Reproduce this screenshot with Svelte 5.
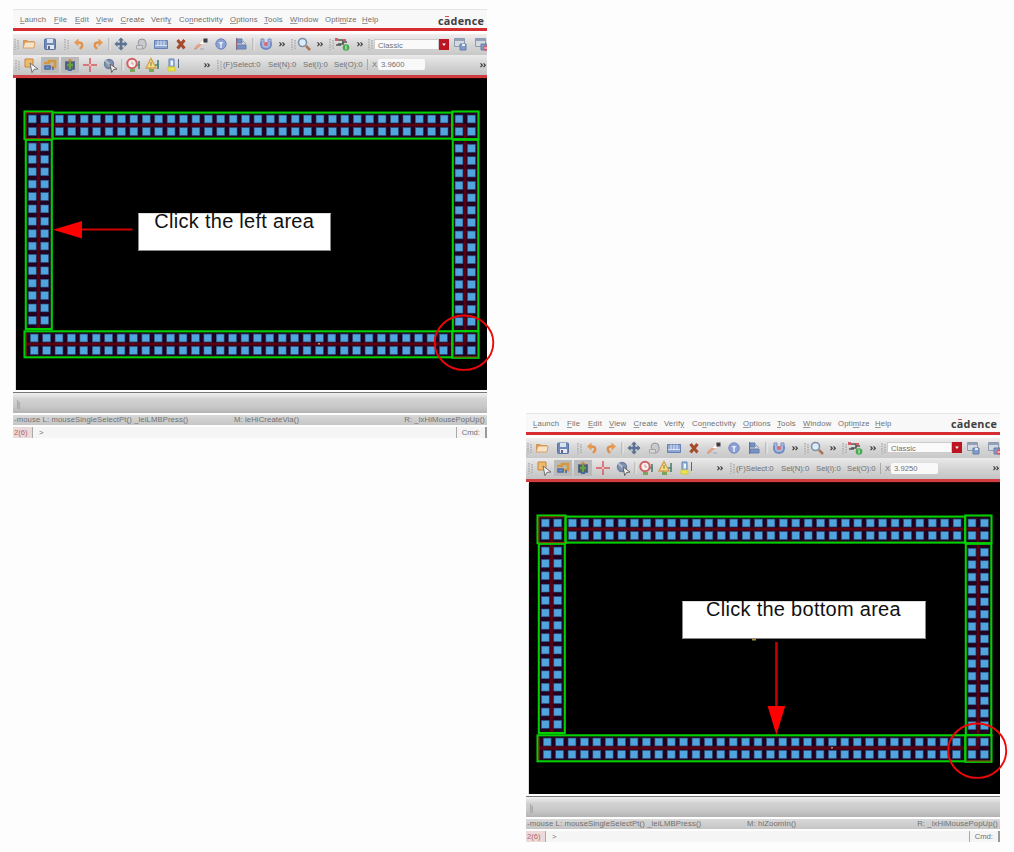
<script>
  const menus = [
    ['', 'L', 'aunch'], ['', 'F', 'ile'], ['', 'E', 'dit'], ['', 'V', 'iew'],
    ['', 'C', 'reate'], ['Verif', 'y', ''], ['Co', 'n', 'nectivity'], ['', 'O', 'ptions'],
    ['', 'T', 'ools'], ['', 'W', 'indow'], ['Opti', 'm', 'ize'], ['', 'H', 'elp']
  ];
  const windows = [
    { id: 'left', x: '3.9600', m: 'M: leHiCreateVia()', note: 'Click the left area' },
    { id: 'bottom', x: '3.9250', m: 'M: hiZoomIn()', note: 'Click the bottom area' }
  ];
  const main = ['grip', 'folder', 'save', 'grip2', 'undo', 'redo', 'sep', 'move', 'copy', 'ruler', 'delete', 'stretch', 'info', 'align', 'sep', 'via', 'more', 'grip', 'search', 'more', 'grip', 'net', 'more', 'grip'];
  const modes = ['grip', 'select', 'partial', 'gravity', 'cross', 'pick', 'sep', 'ring', 'warn', 'level', 'more', 'grip'];
  const range = (n) => Array.from({ length: n }, (_, i) => i);
  const size = 7.8;
  const vias = [];
  const add = (x, y) => vias.push([x - size / 2, y - size / 2]);
  for (const x of [32.3, 44.7, 459, 471.4]) for (const y of [119, 131.5]) add(x, y);
  for (const i of range(32)) for (const y of [119, 131.5]) add(59.4 + i * 12.41, y);
  for (const i of range(34)) for (const y of [338, 350.4]) add(34.2 + i * 12.4, y);
  for (const i of range(15)) {
    for (const x of [32.3, 44.7]) add(x, 147 + i * 12.38);
    for (const x of [459, 471.4]) add(x, 148.3 + i * 12.38);
  }
  for (const x of [459, 471.4]) for (const y of [338, 350.4]) add(x, y);
</script>

{#snippet icon(name)}
  <svg class="ic {name}" viewBox="0 0 16 16">
    {#if name === 'grip' || name === 'grip2'}
      <path d="M7 3v11M10 4v10" stroke="#aaa" stroke-width="1.4" stroke-dasharray="1.5 1" />
    {:else if name === 'sep'}
      <path d="M8 2v12" stroke="#a3a3a3" /><path d="M9 2v12" stroke="#eee" />
    {:else if name === 'more'}
      <path d="M5.5 6.3l1.8 1.9-1.8 1.9M8.5 6.3l1.8 1.9-1.8 1.9" stroke="#3c3c3c" stroke-width="1.2" fill="none" />
    {:else if name === 'folder'}
      <path d="M2 12V4h4l1 1h6v2" fill="#d99752" /><path d="M4 6h10l-1 6H2z" fill="#f7e3c8" stroke="#d69a5c" stroke-width=".9" />
    {:else if name === 'save'}
      <rect x="2.5" y="3" width="11" height="10.5" rx="1" fill="#7189b5" stroke="#5873a6" /><path d="M5 3h6v4H5z" fill="#d9e3f3" /><path d="M5 9h7v4H5z" fill="#e4e7ed" /><path d="M6 10h2v3H6z" fill="#5c6987" />
    {:else if name === 'undo'}
      <path d="M5 6.5h3q4 0 3 4l-2 2.5" fill="none" stroke="#e0914d" stroke-width="2.5" /><path d="M3 6.5l4.5-4v8z" fill="#e69b55" />
    {:else if name === 'redo'}
      <path d="M11 6.5H8q-4 0-3 4l2 2.5" fill="none" stroke="#e0914d" stroke-width="2.5" /><path d="M13 6.5L8.5 2.5v8z" fill="#e69b55" />
    {:else if name === 'move'}
      <path d="M8 3v10M3 8h10" stroke="#5c7292" stroke-width="2.6" /><path d="M8 1.5l3 3H5zM8 14.5l3-3H5zM1.5 8l3-3v6zM14.5 8l-3-3v6z" fill="#5c7292" />
    {:else if name === 'copy'}
      <path d="M5 7q0-4 4-4t4 4v3q-1 3-4 3z" fill="#c9cacb" stroke="#96989d" /><path d="M3.5 9.5h6v3.5h-6z" fill="#d8d8da" stroke="#a3a5a9" />
    {:else if name === 'ruler'}
      <path d="M1.5 4.5h13v8h-13z" fill="#90a7d4" stroke="#647fb6" /><path d="M5 4.5v5M8 4.5v5M11 4.5v5M2 9.5h12" stroke="#dce5f7" />
    {:else if name === 'delete'}
      <path d="M4.5 4l7 8.5M11.5 4l-7 8.5" stroke="#a64a2d" stroke-width="3" />
    {:else if name === 'stretch'}
      <path d="M1 13l3-4 2 2-4 3z" fill="#d19678" /><path d="M3 12l9-8" stroke="#e2a28c" stroke-width="3" /><path d="M6 8l4-4 1 4z" fill="#fff" /><path d="M10.5 2.5h4v4h-4z" fill="#3c4046" /><path d="M7 13h4" stroke="#9ba7b5" />
    {:else if name === 'info'}
      <circle cx="8" cy="8" r="5.2" fill="#8da0d2" stroke="#7187bd" /><path d="M5.5 6h5L8 9z" fill="#e5ebfb" /><path d="M8 8v4" stroke="#e5ebfb" stroke-width="1.5" />
    {:else if name === 'align'}
      <path d="M3.5 2v12" stroke="#a55760" /><path d="M4 3h5v4H4zM4 9h9v4H4z" fill="#7791c5" stroke="#647faf" /><path d="M10 5l3 3" stroke="#8b9dc4" />
    {:else if name === 'via'}
      <path d="M3 3h3v3H3zM10 3h3v3h-3z" fill="#b9c6e5" stroke="#748dc5" /><path d="M3 6q-1 7 5 7t5-7" fill="#a5b6dd" stroke="#6e88c4" stroke-width="1.8" /><circle cx="8" cy="8" r="2" fill="#df6572" />
    {:else if name === 'search'}
      <circle cx="6.5" cy="6.5" r="4" fill="#d8ecfc" stroke="#7f8fa5" stroke-width="1.6" /><path d="M10 10l4 4" stroke="#ac7655" stroke-width="2.5" />
    {:else if name === 'net'}
      <path d="M2 4h7v4H4M9 6h4M2 9h5" stroke="#555" stroke-width="1.6" fill="none" /><path d="M1 2h3v3H1zM9 3h3v2H9z" fill="#dc5966" /><circle cx="12" cy="11.5" r="3.3" fill="#45a951" /><path d="M12 9.5v4" stroke="#dfffdc" />
    {:else if name === 'select'}
      <path d="M2 2h8v8H2z" fill="#eebb6b" stroke="#c48542" /><path d="M7 6l8 6-4 .3-2 3.3z" fill="#f7f7f7" stroke="#666" stroke-width=".9" />
    {:else if name === 'partial'}
      <path d="M2 6h5V4h6v6H8" fill="none" stroke="#d6983f" stroke-width="2.7" /><path d="M3 9h5v3H3zM11 10v3" stroke="#4c6da7" stroke-width="1.6" fill="#7593cc" />
    {:else if name === 'gravity'}
      <path d="M4 5h8v7H4z" fill="#626d4f" stroke="#425c82" stroke-width="1.7" /><path d="M8 1.5l3 3H5z" fill="#c78c3e" /><path d="M8 5v7M5 8h6" stroke="#62a346" stroke-width="2" /><path d="M6 13h4" stroke="#4a68a3" stroke-width="2" />
    {:else if name === 'cross'}
      <path d="M8 1v14M1 8h14" stroke="#d9585d" stroke-width="1.5" /><circle cx="8" cy="8" r="1" fill="#f8dada" />
    {:else if name === 'pick'}
      <circle cx="7" cy="7" r="4.5" fill="#8294b2" stroke="#6c7e9c" stroke-width="1.4" /><path d="M3 3l8 8" stroke="#aebbd1" stroke-width="2" /><path d="M8 7l7 5-3.5.5-1.8 3z" fill="#eee" stroke="#555" stroke-width=".9" />
    {:else if name === 'ring'}
      <path d="M14 4v8M11 8h4M7 11v4" stroke="#4f8578" stroke-width="1.7" /><path d="M5 12h5v3H5z" fill="#79a75d" /><circle cx="7" cy="6.5" r="4.7" fill="#faeeec" stroke="#cf5f62" stroke-width="2" /><path d="M7 4.5V7h2" stroke="#b5898a" stroke-width=".8" />
    {:else if name === 'warn'}
      <path d="M14 3v9M11 8h4M6 10v5" stroke="#4f8578" stroke-width="1.7" /><path d="M5 12h5v3H5z" fill="#79a75d" /><path d="M7 1.5L12 11H2z" fill="#f1e08a" stroke="#d3a04c" stroke-width="1.3" /><path d="M7 5v4" stroke="#857438" />
    {:else if name === 'level'}
      <path d="M5 2h5v8H5z" fill="#a9c1e4" stroke="#5d80b6" /><path d="M7 4h2v4H7z" fill="#f5f8fd" /><path d="M4 10h7v4H4z" fill="#eee34e" stroke="#d2c844" /><path d="M14.5 2v9" stroke="#536a8b" />
    {:else if name === 'wsave' || name === 'wdel'}
      <path d="M2.5 2.5h10v8h-10z" fill="#d4d9e2" stroke="#8f9bb0" /><path d="M3 4h9" stroke="#8292b0" stroke-width="1.6" /><path d="M8 8h6v6H8z" fill="#819bca" stroke="#657ea9" />
      {#if name === 'wdel'}<circle cx="13" cy="12" r="2.7" fill="#d75961" /><path d="M11.5 12h3" stroke="#fff" />{:else}<path d="M10 8h3v2h-3z" fill="#e5edf9" />{/if}
    {/if}
  </svg>
{/snippet}

<div class="page">
  {#each windows as win}
    <section class="window {win.id}">
      <nav class="menubar">
        {#each menus as [a, key, b]}<span>{a}<u>{key}</u>{b}</span>{/each}
        <strong class="brand">c<i>a</i>dence</strong>
      </nav>
      <div class="bar main">
        {#each main as name}{@render icon(name)}{/each}
        <div class="combo">Classic</div>
        <div class="drop"><svg viewBox="0 0 10 12"><path d="M3 5h4L5 7.5z" fill="#fff" /></svg></div>
        {@render icon('wsave')}
        {@render icon('wdel')}
      </div>
      <div class="bar modes">
        {#each modes as name}{@render icon(name)}{/each}
        <span>(F)Select:0</span><span>Sel(N):0</span><span>Sel(I):0</span><span>Sel(O):0</span>
        <span class="coord">X</span><span class="field">{win.x}</span>
        {@render icon('more')}
      </div>
      <svg class="canvas" viewBox="16 79 471 311">
        <rect x="16" y="79" width="471" height="311" fill="#000" />
        <path d="M25 112h453v246H25zM52 139v192h400V139z" fill="#22001f" fill-rule="evenodd" />
        <path d="M38.5 329V125.2H465V344H26" fill="none" stroke="#5b0011" stroke-width="2.8" />
        {#each vias as [x, y]}
          <rect {x} {y} width={size} height={size} fill="#50a5df" stroke="#2d5580" stroke-width=".6" />
        {/each}
        <g class="outline">
          <rect x="24.5" y="111.5" width="28" height="27.6" />
          <rect x="52.5" y="112.6" width="399.5" height="26" />
          <rect x="452.3" y="111.5" width="26.2" height="27.6" />
          <rect x="25.8" y="139.8" width="26" height="189.2" />
          <rect x="452.8" y="139.8" width="25.5" height="191.2" />
          <rect x="24.5" y="331.3" width="427.8" height="26" />
          <rect x="452.3" y="331.3" width="26.2" height="26.5" />
        </g>
        <path d="M26 138.6V112.8H51.5M26 356V333M453 357h25M26 138.6h26" fill="none" stroke="#8f3a08" stroke-width="1" />
        <rect x="318" y="343" width="2" height="1.5" fill="#a99a7b" />
      </svg>
      <div class="prompt"><svg viewBox="0 0 8 14"><path d="M3 2v10M5 4v8" stroke="#aaa" stroke-width="1.5" /></svg></div>
      <div class="mouse"><span>-mouse L: mouseSingleSelectPt() _leiLMBPress()</span><span>{win.m}</span><span>R: _lxHiMousePopUp()</span></div>
      <div class="command"><span class="count">2(6)</span><span class="caret">&gt;</span><span class="cmd">Cmd:</span></div>

      <svg class="marks" viewBox="0 0 488 430">
        {#if win.id === 'left'}
          <path d="M68 220.5h51.5" stroke="#ce0000" stroke-width="2.2" />
          <path d="M40 220.7l29-8.7v17.4z" fill="#f00" />
          <ellipse cx="451" cy="333.7" rx="29.3" ry="27.2" />
        {:else}
          <path d="M250.4 229v66" stroke="#c40000" stroke-width="2.5" />
          <path d="M250.4 322l-8.8-29h17.6z" fill="#f00" />
          <ellipse cx="451.2" cy="337.7" rx="29" ry="27.2" />
          <path d="M226 226.5h4" stroke="#a79038" stroke-width="2" />
        {/if}
      </svg>
      <div class="note"><span>{win.note}</span></div>
    </section>
  {/each}
</div>

<style>
  :global(body) { background: #fdfdfd; }
  .page { box-sizing: border-box; width: 1014px; height: 852px; padding: 9px 0 0 13px; display: flex; gap: 39px; align-items: flex-start; overflow: hidden; font: 7.7px "Liberation Sans", Arial, sans-serif; color: #707070; }
  .window { position: relative; flex: none; width: 474px; height: 430px; white-space: nowrap; display: flex; flex-direction: column; }
  .window.bottom { margin-top: 403.5px; }
  .menubar { flex: none; box-sizing: border-box; height: 22px; padding-left: 7px; border-top: 1px solid #e7e3e3; border-bottom: 3px solid #d52d32; background: #f8f8f8; display: grid; grid-template-columns: 34px 21px 21px 24.5px 30.5px 28px 51px 34px 26px 35px 37px 76px 49px; align-items: center; }
  .menubar span { letter-spacing: .17px; padding-top: 1px; }
  u { text-decoration-thickness: .7px; text-underline-offset: 1px; text-decoration-color: #999; }
  .brand { font: bold 10.8px "Open Sans", "Noto Sans", sans-serif; letter-spacing: .25px; color: #404040; padding-top: 2px; }
  .brand i { position: relative; font-style: normal; }
  .brand i::after { content: ""; position: absolute; left: 1px; top: 3px; width: 4px; height: 1.4px; background: #e34850; }
  .bar { flex: none; display: grid; align-items: center; overflow: hidden; }
  .main { height: 20.5px; margin-top: 3px; background: linear-gradient(#f1eeee, #d8d8d8 45%, #c8c8c8); grid-template-columns: 6px 20px 22px 9px 17px 21px 2px 21px 20px 20px 20px 20px 20px 20px 4px 21px 12px 10px 11px 22px 0 22px 13px 7px 66px 10px 22px 19px; }
  .modes { height: 20.5px; background: linear-gradient(#ebe9e9, #d5d5d5 50%, #c3c3c3); border-bottom: 3px solid #cf3d40; grid-template-columns: 8px 19px 20px 20px 19px 22px 2px 19px 20px 20px 33px 8px 45px 35px 31px 33px 11px 47px 66px; }
  .ic { width: 16px; height: 16px; fill: none; justify-self: center; align-self: center; }
  .modes .more { justify-self: end; }
  .partial, .gravity { background: #b9bab9; width: 18px; }
  .combo { box-sizing: border-box; height: 11px; margin-left: 1px; padding-left: 3px; line-height: 11px; background: #fafafa; border: .5px solid #ccc; }
  .drop { height: 11px; background: #bd1622; }
  .drop svg { display: block; width: 10px; height: 11px; }
  .coord { border-left: 1px solid #aaa; padding-left: 4px; box-sizing: border-box; height: 11px; line-height: 11px; }
  .field { background: #f9f9f9; height: 11px; line-height: 11px; padding-left: 3px; border-radius: 2px; }
  .canvas { display: block; flex: none; width: 471px; height: 311px; margin: 1px 0 0 3px; box-shadow: 0 -1px 0 #2a0000, -1px 0 0 #ddd; }
  .outline { fill: none; stroke: #00cf00; stroke-width: 2.1; }
  .prompt { flex: none; box-sizing: border-box; height: 21px; border-top: 1px solid #777; margin-top: 2px; background: linear-gradient(#f1f1f1, #d2d2d2 30%, #c7c7c7 70%, #b3b3b3); padding: 5px 0 0 2px; }
  .prompt svg { display: block; width: 7px; height: 13px; }
  .mouse { flex: none; height: 10px; margin-top: 2px; background: linear-gradient(#d8d8d8, #c5c5c5); display: grid; grid-template-columns: 220px 1fr auto; padding: 0 2px 0 1px; line-height: 10px; letter-spacing: .11px; }
  .command { flex: none; margin-top: 2px; height: 11px; display: flex; line-height: 11px; background: #f5f5f5; }
  .count { width: 18px; background: #ecd9da; border-right: 1px solid #aaa; color: #b16669; padding-left: 1px; }
  .caret { padding-left: 6px; }
  .cmd { margin-left: auto; border-left: 1px solid #aaa; padding: 0 5px; border-right: 2px solid #999; }
  .marks { position: absolute; left: 0; top: 0; width: 488px; height: 430px; overflow: visible; fill: none; }
  .marks ellipse { stroke: #ee0808; stroke-width: 1.9; }
  .note { position: absolute; box-sizing: border-box; height: 38px; background: #fff; border: 1px solid #888; border-top-color: #ddd; color: #111; text-align: center; line-height: 15px; font-size: 20px; letter-spacing: .28px; }
  .left .note { left: 124.5px; top: 204px; width: 193.5px; }
  .bottom .note { left: 155.5px; top: 188.5px; width: 244px; }
</style>
